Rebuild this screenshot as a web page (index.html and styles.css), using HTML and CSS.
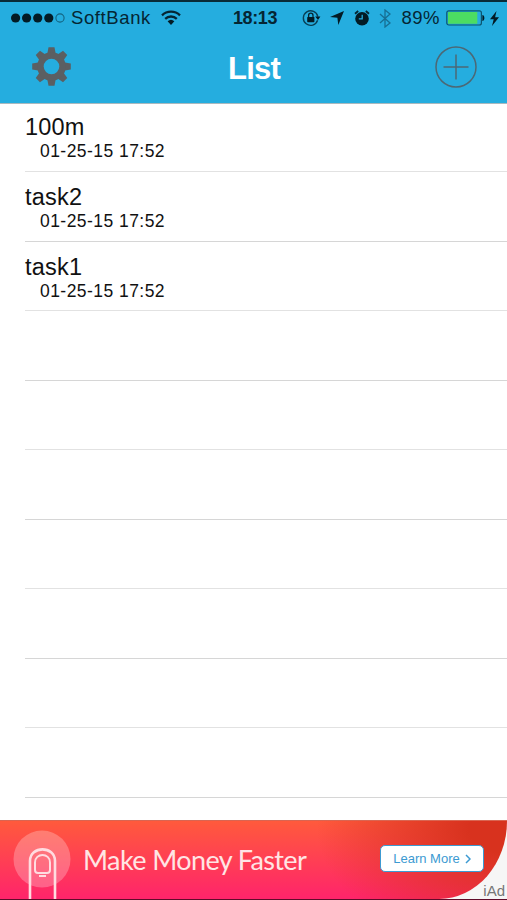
FILE: index.html
```html
<!DOCTYPE html>
<html lang="en">
<head>
    <meta charset="UTF-8">
    <meta name="viewport" content="width=device-width, initial-scale=1.0">
    <title>List</title>
    <link rel="stylesheet" href="styles.css">
</head>
<body>
    <header class="header">
        <div class="status-bar">
            <div class="status-left">
                <svg class="signal" width="55" height="12" viewBox="0 0 55 12">
                    <circle cx="4.6" cy="6" r="4.6"/>
                    <circle cx="15.6" cy="6" r="4.6"/>
                    <circle cx="26.7" cy="6" r="4.6"/>
                    <circle cx="37.8" cy="6" r="4.6"/>
                    <circle class="signal-empty" cx="49" cy="6" r="4.1"/>
                </svg>
                <span class="carrier">SoftBank</span>
                <svg class="wifi" width="20" height="16" viewBox="0 0 20 16">
                    <path d="M1 5.3a13 13 0 0 1 18 0M4.2 8.8a8.5 8.5 0 0 1 11.6 0" fill="none" stroke="#052633" stroke-width="2.3"/>
                    <path d="M6.6 11.3a5 5 0 0 1 6.8 0L10 15z"/>
                </svg>
            </div>
            <span class="time">18:13</span>
            <div class="status-right">
                <svg class="lock" width="19" height="18" viewBox="0 0 19 18">
                    <path d="M15.6 11.3A7.3 7.3 0 1 1 15.8 7.6" fill="none" stroke="#083f55" stroke-width="1.4"/>
                    <path d="M13.2 7.6h5.2L16 11z"/>
                    <rect x="5.2" y="8" width="7.2" height="5.2" rx=".6"/>
                    <path d="M6.6 8V6.4a2.2 2.2 0 0 1 4.4 0V8" fill="none" stroke="#052633" stroke-width="1.3"/>
                </svg>
                <svg class="arrow" width="14" height="14" viewBox="0 0 14 14">
                    <path d="M14 0L8.3 14 7.4 6.8 0 6z"/>
                </svg>
                <svg class="alarm" width="16" height="16" viewBox="0 0 16 16">
                    <circle cx="8" cy="8.7" r="6.8"/>
                    <path d="M1 3.8L4.2 1M15 3.8L11.8 1" stroke="#052633" stroke-width="1.8"/>
                    <path d="M8.2 4.7v4.2H4.8" fill="none" stroke="#25addf" stroke-width="1.3"/>
                </svg>
                <svg class="bluetooth" width="12" height="19" viewBox="0 0 12 19">
                    <path d="M1 5l10 9-5 4V1l5 4-10 9" fill="none" stroke="#176f93" stroke-width="1.3"/>
                </svg>
                <span class="percent">89%</span>
                <svg class="battery" width="39" height="16" viewBox="0 0 39 16">
                    <rect x=".8" y=".8" width="34.6" height="14.2" rx="2" fill="none" stroke="#0c5570" stroke-width="1.2"/>
                    <rect x="2" y="2" width="29.3" height="11.8" rx=".6" fill="#4cdc62"/>
                    <path d="M36.4 5c2.6.4 2.6 5.6 0 6z"/>
                </svg>
                <svg class="bolt" width="9" height="15" viewBox="0 0 9 15">
                    <path d="M6.5 0L0 8.3h3.7L2 15l7-8.8H5.1z"/>
                </svg>
            </div>
        </div>
        <nav class="nav-bar">
            <button class="nav-button" aria-label="Settings">
                <svg width="40" height="40" viewBox="-20.5 -19.5 40 40">
                    <g fill="#5b5f62">
                        <path id="tooth" d="M-4.3-12l1.3-7.3h6L4.3-12V12L3 19.3h-6L-4.3 12z"/>
                        <use href="#tooth" transform="rotate(45)"/>
                        <use href="#tooth" transform="rotate(90)"/>
                        <use href="#tooth" transform="rotate(135)"/>
                        <circle r="14.3"/>
                    </g>
                    <circle r="7.8" fill="#25addf"/>
                </svg>
            </button>
            <h1 class="title">List</h1>
            <button class="nav-button" aria-label="Add">
                <svg width="42" height="42" viewBox="0 0 42 42" fill="none" stroke="#4c6875" stroke-width="1.5">
                    <circle cx="21" cy="21" r="20"/>
                    <path d="M21 8.5v25M8.500 21h25"/>
                </svg>
            </button>
        </nav>
    </header>

    <ul class="list">
        <li class="row">
            <span class="name">100m</span>
            <span class="date">01-25-15 17:52</span>
        </li>
        <li class="row">
            <span class="name">task2</span>
            <span class="date">01-25-15 17:52</span>
        </li>
        <li class="row">
            <span class="name">task1</span>
            <span class="date">01-25-15 17:52</span>
        </li>
        <li class="row"></li>
        <li class="row"></li>
        <li class="row"></li>
        <li class="row"></li>
        <li class="row"></li>
        <li class="row"></li>
        <li class="row"></li>
    </ul>

    <footer class="ad">
        <div class="ad-banner">
            <svg class="finger" width="58" height="77" viewBox="0 0 58 77">
                <circle cx="29" cy="37" r="28.5" fill="#fff" fill-opacity=".25"/>
                <g fill="none" stroke="#ffdce0">
                    <path d="M17 77V39c0-15.500 25-15.500 25 0v38" stroke-width="2.6"/>
                    <path d="M22 48V40.500c0-10 15-10 15 0V48q0 3-3 3h-9q-3 0-3-3zM26 54h7" stroke-width="2"/>
                </g>
            </svg>
            <span class="ad-text">Make Money Faster</span>
            <button class="learn-more">Learn More
                <svg width="6" height="10" viewBox="0 0 6 10"><path d="M1 1l4 4-4 4" fill="none" stroke="#3c9ad2" stroke-width="1.5"/></svg>
            </button>
        </div>
        <span class="iad">iAd</span>
    </footer>
</body>
</html>
```

FILE: styles.css
```css
* {
    box-sizing: border-box;
}

body {
    margin: 0;
    height: 900px;
    display: flex;
    flex-direction: column;
    overflow: hidden;
    background-color: #fff;
    color: #111;
    font-family: "Liberation Sans", Arial, sans-serif;
}

svg {
    display: block;
    flex: none;
}

button {
    border: none;
    padding: 0;
    background: none;
    font-family: inherit;
}

/* Header */
.header {
    height: 104px;
    flex: none;
    background-color: #25addf;
    border-top: 2px solid #092b38;
    border-bottom: 1px solid #a9b9bf;
}

.status-bar {
    height: 32px;
    padding: 0 8px 0 11px;
    display: grid;
    grid-template-columns: 1fr auto 1fr;
    align-items: center;
    color: #052633;
    fill: #031b25;
    font-size: 18.5px;
}

.status-left,
.status-right {
    display: flex;
    align-items: center;
}

.status-right {
    justify-content: flex-end;
}

.signal-empty {
    fill: none;
    stroke: #136381;
    stroke-width: 1.1;
}

.carrier {
    width: 80px;
    margin: 0 10px 0 5px;
    letter-spacing: 0.6px;
}

.time {
    font-weight: bold;
    font-size: 18px;
    letter-spacing: -0.4px;
}

.arrow {
    margin-left: 9px;
}

.alarm {
    margin-left: 10px;
}

.bluetooth {
    margin-left: 9px;
}

.percent {
    margin: 0 6px 0 10px;
    letter-spacing: 0.5px;
}

.bolt {
    margin-left: 5px;
}

.nav-bar {
    height: 66px;
    padding: 0 30px 0 31px;
    display: grid;
    grid-template-columns: 1fr auto 1fr;
    align-items: center;
}

.nav-button:last-child {
    justify-self: end;
}

.nav-button:first-child {
    justify-self: start;
}

.title {
    margin: 4px 0 0;
    color: #fff;
    font-size: 31px;
    line-height: 34px;
    letter-spacing: -0.8px;
}

/* List */
.list {
    flex: 1;
    margin: 0;
    padding: 0 0 0 25px;
    list-style: none;
}

.row {
    height: 69.55px;
    padding-top: 11px;
    border-bottom: 1px solid #d6d6d6;
}

.row:nth-child(odd) {
    border-color: #e2e2e2;
}

.row:first-child {
    height: 68px;
    padding-top: 9px;
}

.name,
.date {
    display: block;
    white-space: nowrap;
}

.name {
    font-size: 23.5px;
    line-height: 28px;
    letter-spacing: 0.2px;
}

.date {
    margin-left: 15px;
    font-size: 17.5px;
    line-height: 20px;
    letter-spacing: 0.45px;
}

/* Ad */
.ad {
    position: relative;
    height: 80px;
    flex: none;
    background-color: #f6f6f6;
    border-top: 1px solid #d96552;
    border-bottom: 1px solid #600b29;
}

.ad-banner {
    height: 100%;
    padding: 0 23px 0 13px;
    display: flex;
    align-items: center;
    border-bottom-right-radius: 68px 78px;
    background:
        radial-gradient(ellipse 190px 120px at 100% 10%, #d8321e 20%, rgba(216, 50, 30, 0) 100%),
        linear-gradient(#ff5a3c, #ff246b);
}

.finger {
    align-self: flex-end;
}

.ad-text {
    margin: 0 0 1px 12px;
    color: #ffe5e4;
    font-family: Lato, sans-serif;
    font-size: 27px;
    letter-spacing: -0.6px;
    white-space: nowrap;
}

.learn-more {
    width: 104px;
    height: 27px;
    margin: 0 0 3px auto;
    display: flex;
    align-items: center;
    justify-content: center;
    gap: 5px;
    border: 1.5px solid #3c9ad2;
    border-radius: 5px;
    background-color: #fff;
    color: #3c9ad2;
    font-size: 13px;
    white-space: nowrap;
}

.iad {
    position: absolute;
    right: 2px;
    bottom: 0;
    color: #777;
    font-size: 15px;
    line-height: 17px;
}
```
